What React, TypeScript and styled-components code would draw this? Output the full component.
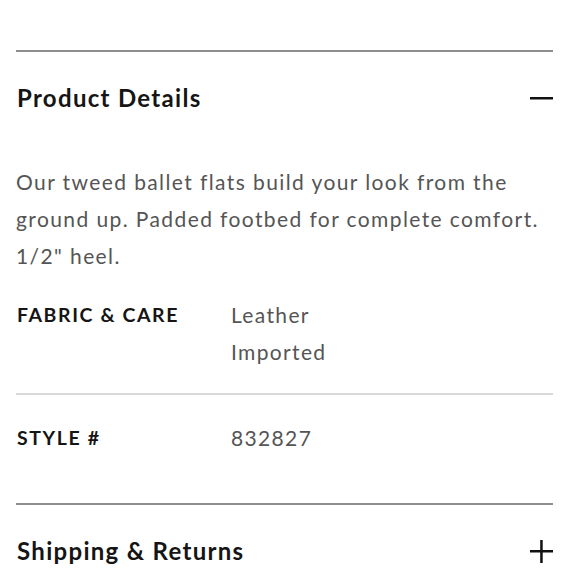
import React from "react";
import styled, { createGlobalStyle } from "styled-components";

const Global = createGlobalStyle`
  html, body { margin: 0; padding: 0; background: #fff; }
  body { font-family: Lato, "Open Sans", Arial, sans-serif; -webkit-font-smoothing: antialiased; }
`;

const Page = styled.div`
  padding: 50px 27px 0 16px;
  width: 580px;
  box-sizing: border-box;
`;

const Item = styled.section`
  border-top: 2px solid #8e8e8e;
`;

const Header = styled.div`
  height: 92px;
  display: flex;
  align-items: center;
  justify-content: space-between;
`;

const Title = styled.h2`
  margin: 0;
  padding-left: 1px;
  font-size: 24px;
  line-height: 30px;
  margin-top: -1px;
  font-weight: 700;
  color: #151515;
  letter-spacing: 1.3px;
`;

const Icon = styled.svg`
  width: 23px;
  height: 23px;
  display: block;
`;

const Body = styled.div`
  padding: 19px 0 47px;
`;

const Text = styled.p`
  margin: 0;
  font-size: 21px;
  line-height: 37px;
  color: #555;
  letter-spacing: 1.4px;
`;

const SpecRow = styled.div<{ $divider?: boolean }>`
  display: grid;
  grid-template-columns: 215px 1fr;
  margin-top: ${(p) => (p.$divider ? "0" : "22px")};
  padding: ${(p) => (p.$divider ? "24px 0 0" : "0 0 23px")};
  border-top: ${(p) => (p.$divider ? "2px solid #d9d9d9" : "none")};
`;

const Label = styled.div`
  padding-left: 1px;
  font-size: 19.5px;
  line-height: 37px;
  font-weight: 700;
  color: #151515;
  letter-spacing: 1.6px;
  text-transform: uppercase;
`;

const Value = styled.div`
  font-size: 21px;
  line-height: 37px;
  color: #555;
  letter-spacing: 1.35px;
`;

const Minus = () => (
  <Icon viewBox="0 0 23 23">
    <rect x="0" y="10" width="23" height="2.5" fill="#111" />
  </Icon>
);

const Plus = () => (
  <Icon viewBox="0 0 23 23">
    <rect x="0" y="10" width="23" height="2.5" fill="#111" />
    <rect x="10.2" y="0" width="2.5" height="23" fill="#111" />
  </Icon>
);

export default function App() {
  return (
    <>
      <Global />
      <Page>
        <Item>
          <Header>
            <Title>Product Details</Title>
            <Minus />
          </Header>
          <Body>
            <Text>
              Our tweed ballet flats build your look from the ground up. Padded footbed for complete comfort. 1/2" heel.
            </Text>
            <SpecRow>
              <Label>Fabric &amp; Care</Label>
              <Value>
                Leather
                <br />
                Imported
              </Value>
            </SpecRow>
            <SpecRow $divider>
              <Label>Style #</Label>
              <Value>832827</Value>
            </SpecRow>
          </Body>
        </Item>
        <Item>
          <Header>
            <Title>Shipping &amp; Returns</Title>
            <Plus />
          </Header>
        </Item>
      </Page>
    </>
  );
}
